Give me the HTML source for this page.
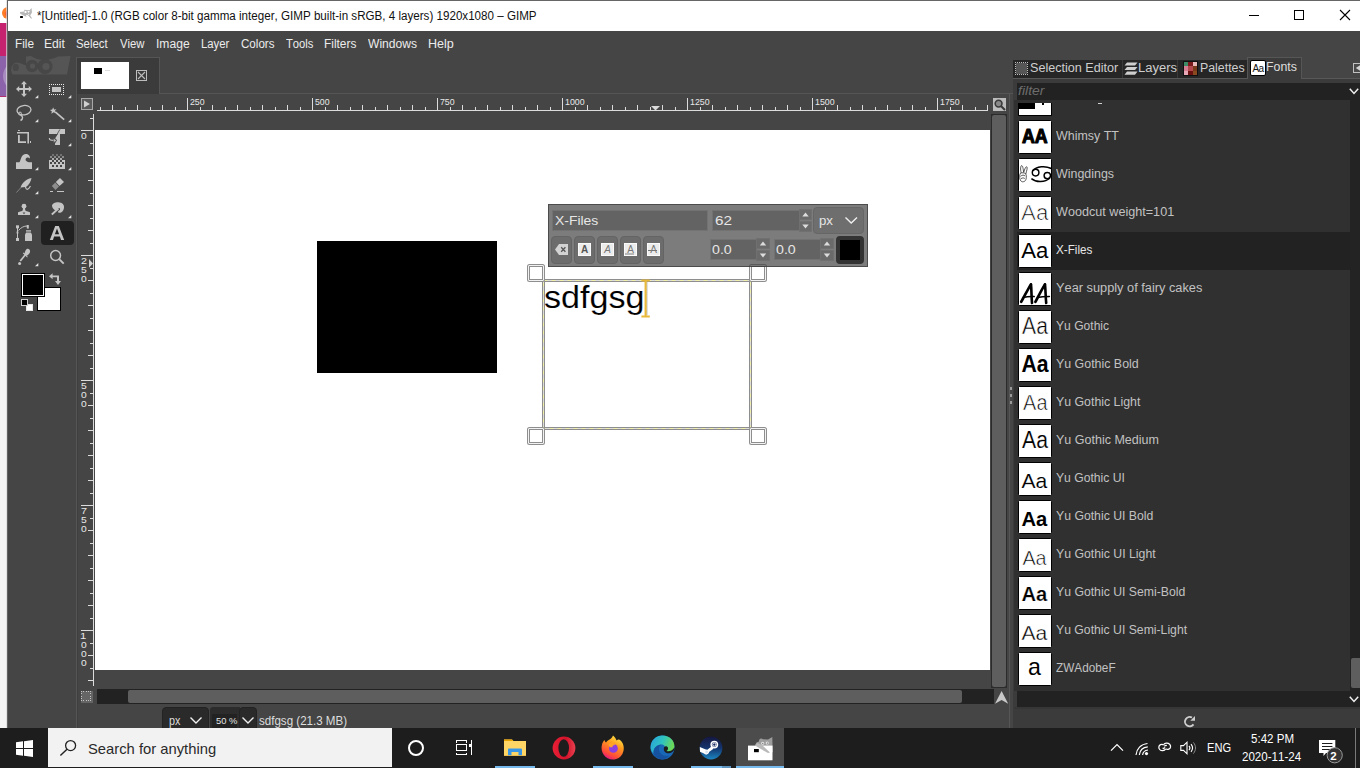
<!DOCTYPE html>
<html><head><meta charset="utf-8"><title>GIMP</title>
<style>
html,body{margin:0;padding:0;}
body{width:1360px;height:768px;overflow:hidden;position:relative;background:#454545;font-family:"Liberation Sans", sans-serif;}
.b{position:absolute;box-sizing:border-box;}
.t{position:absolute;white-space:pre;font-kerning:none;transform-origin:0 0;font-family:"Liberation Sans", sans-serif;}
svg{position:absolute;overflow:visible;}
</style></head><body>

<!-- left strip of the window behind -->
<div class="b" style="left:0px;top:0px;width:8px;height:768px;background:#f4f4f4;"></div>
<div class="b" style="left:0px;top:0px;width:8px;height:24px;background:#ffffff;"></div>
<div class="b" style="left:0px;top:23px;width:8px;height:33px;background:#c5226f;"></div>
<div class="b" style="left:0px;top:56px;width:8px;height:40px;background:#8c62ab;"></div>
<div class="b" style="left:0px;top:96px;width:8px;height:1px;background:#b03070;"></div>
<svg style="left:0px;top:0px;overflow:hidden" width="8" height="24"><circle cx="8" cy="13" r="6" fill="#ff7d26"/><circle cx="9" cy="14" r="3.5" fill="#e6353f"/></svg>
<svg style="left:0;top:56px;overflow:hidden" width="8" height="40"><circle cx="18" cy="20" r="15" fill="#a88cc0"/></svg>
<div class="b" style="left:6px;top:0px;width:1px;height:728px;background:#d8d8d8;opacity:.7"></div>
<div class="b" style="left:7px;top:0px;width:1px;height:728px;background:#626262;"></div>
<!-- title bar -->
<div class="b" style="left:8px;top:0px;width:1352px;height:31px;background:#ffffff;"></div>
<div class="b" style="left:7px;top:0px;width:1353px;height:1px;background:#666666;"></div>
<svg style="left:19px;top:7px" width="16" height="14" viewBox="19 7 16 14"><path d="M20 12 L24 11.6 L24.3 9.8 L29.5 10.2 L31.6 8 L32 12.5 L30.2 15.4 L31.2 17 L32.2 18.8 L30.6 18.2 L28.6 15.8 L25.5 16.6 L22.5 15 L20 13.6 Z" fill="#b9b9b9"/><rect x="24.6" y="11" width="1.8" height="2" fill="#fff"/><path d="M27.4 11 L29.8 11 L28.6 13 Z" fill="#fff"/><rect x="26" y="15" width="2.2" height="1" fill="#f4f4f4"/><rect x="28.2" y="14" width="1" height="1" fill="#f4f4f4"/><rect x="20" y="16" width="3" height="2" rx="0.4" fill="#000"/></svg>
<span class="t" style="left:37.31px;top:10.00px;font-size:12px;line-height:12px;color:#111;transform:scaleX(0.9678);">*[Untitled]-1.0 (RGB color 8-bit gamma integer, GIMP built-in sRGB, 4 layers) 1920x1080 – GIMP</span>
<div class="b" style="left:1249px;top:15px;width:10px;height:1px;background:#000;"></div>
<div class="b" style="left:1294px;top:10px;width:10px;height:10px;background:transparent;border:1px solid #000"></div>
<svg style="left:1340px;top:10px" width="10" height="10"><path d="M0 0 L10 10 M10 0 L0 10" stroke="#000" stroke-width="1.1" fill="none"/></svg>
<!-- menu bar -->
<span class="t" style="left:14.53px;top:38.00px;font-size:12px;line-height:12px;color:#ececec;transform:scaleX(0.9821);">File</span>
<span class="t" style="left:44.26px;top:38.00px;font-size:12px;line-height:12px;color:#ececec;transform:scaleX(1.0074);">Edit</span>
<span class="t" style="left:76.48px;top:38.00px;font-size:12px;line-height:12px;color:#ececec;transform:scaleX(0.9475);">Select</span>
<span class="t" style="left:119.95px;top:38.00px;font-size:12px;line-height:12px;color:#ececec;transform:scaleX(0.9428);">View</span>
<span class="t" style="left:155.88px;top:38.00px;font-size:12px;line-height:12px;color:#ececec;transform:scaleX(1.0091);">Image</span>
<span class="t" style="left:200.57px;top:38.00px;font-size:12px;line-height:12px;color:#ececec;transform:scaleX(0.9451);">Layer</span>
<span class="t" style="left:240.66px;top:38.00px;font-size:12px;line-height:12px;color:#ececec;transform:scaleX(0.9663);">Colors</span>
<span class="t" style="left:286.00px;top:38.00px;font-size:12px;line-height:12px;color:#ececec;transform:scaleX(0.9340);">Tools</span>
<span class="t" style="left:324.02px;top:38.00px;font-size:12px;line-height:12px;color:#ececec;transform:scaleX(0.9921);">Filters</span>
<span class="t" style="left:368.20px;top:38.00px;font-size:12px;line-height:12px;color:#ececec;transform:scaleX(1.0064);">Windows</span>
<span class="t" style="left:428.22px;top:38.00px;font-size:12px;line-height:12px;color:#ececec;transform:scaleX(1.0456);">Help</span>
<!-- toolbox -->
<div class="b" style="left:76px;top:94px;width:1px;height:634px;background:#555555;"></div>
<div class="b" style="left:77px;top:94px;width:1px;height:634px;background:#3f3f3f;"></div>
<svg style="left:8px;top:54px" width="68" height="24" viewBox="8 54 68 24"><path d="M26 56.5 L31 56 C36 59 40 60 44 60 C50 60 55 58 58 56.5 L70.5 56 L67 74.5 L12.5 74.5 C10 70 11 64 16 62.5 C20 62 23 65 26 65 Z" fill="#555555"/><ellipse cx="15.8" cy="67.4" rx="3.1" ry="3.6" fill="#484848"/><circle cx="32" cy="66" r="6.2" fill="#474747"/><circle cx="32.5" cy="66" r="2.6" fill="#555"/><circle cx="45" cy="66.5" r="7.6" fill="#474747"/><circle cx="46" cy="66.5" r="3.6" fill="#555"/></svg>
<svg style="left:16px;top:81px" width="16" height="16" viewBox="0 0 16 16"><path d="M8 0 L11 3.2 L9 3.2 L9 7 L12.8 7 L12.8 5 L16 8 L12.8 11 L12.8 9 L9 9 L9 12.8 L11 12.8 L8 16 L5 12.8 L7 12.8 L7 9 L3.2 9 L3.2 11 L0 8 L3.2 5 L3.2 7 L7 7 L7 3.2 L5 3.2 Z" fill="#c4c4c4"/></svg>
<svg style="left:35px;top:95px" width="4" height="4"><path d="M3.3 0 L3.3 3.3 L0 3.3 Z" fill="#e2e2e2"/></svg>
<svg style="left:49px;top:84px" width="16" height="12" viewBox="0 0 16 12" shape-rendering="crispEdges"><rect x="0" y="0" width="1" height="1" fill="#e8e8e8"/><rect x="0" y="10" width="1" height="1" fill="#e8e8e8"/><rect x="2" y="0" width="1" height="1" fill="#e8e8e8"/><rect x="2" y="10" width="1" height="1" fill="#e8e8e8"/><rect x="4" y="0" width="1" height="1" fill="#e8e8e8"/><rect x="4" y="10" width="1" height="1" fill="#e8e8e8"/><rect x="6" y="0" width="1" height="1" fill="#e8e8e8"/><rect x="6" y="10" width="1" height="1" fill="#e8e8e8"/><rect x="8" y="0" width="1" height="1" fill="#e8e8e8"/><rect x="8" y="10" width="1" height="1" fill="#e8e8e8"/><rect x="10" y="0" width="1" height="1" fill="#e8e8e8"/><rect x="10" y="10" width="1" height="1" fill="#e8e8e8"/><rect x="12" y="0" width="1" height="1" fill="#e8e8e8"/><rect x="12" y="10" width="1" height="1" fill="#e8e8e8"/><rect x="14" y="0" width="1" height="1" fill="#e8e8e8"/><rect x="14" y="10" width="1" height="1" fill="#e8e8e8"/><rect x="0" y="2" width="1" height="1" fill="#e8e8e8"/><rect x="14" y="2" width="1" height="1" fill="#e8e8e8"/><rect x="0" y="4" width="1" height="1" fill="#e8e8e8"/><rect x="14" y="4" width="1" height="1" fill="#e8e8e8"/><rect x="0" y="6" width="1" height="1" fill="#e8e8e8"/><rect x="14" y="6" width="1" height="1" fill="#e8e8e8"/><rect x="0" y="8" width="1" height="1" fill="#e8e8e8"/><rect x="14" y="8" width="1" height="1" fill="#e8e8e8"/><rect x="3" y="3" width="9" height="5" fill="#c4c4c4"/></svg>
<svg style="left:68px;top:95px" width="4" height="4"><path d="M3.3 0 L3.3 3.3 L0 3.3 Z" fill="#e2e2e2"/></svg>
<svg style="left:15px;top:104px" width="18" height="18" viewBox="15 104 18 18"><ellipse cx="24" cy="110.2" rx="7" ry="4.7" transform="rotate(-8 24 110.2)" fill="none" stroke="#c4c4c4" stroke-width="1.3"/><circle cx="20" cy="113.6" r="1.5" fill="none" stroke="#c4c4c4" stroke-width="1"/><path d="M20.5 115 C23 116 23.5 119 20.5 120.5" fill="none" stroke="#c4c4c4" stroke-width="1.4"/></svg>
<svg style="left:35px;top:119px" width="4" height="4"><path d="M3.3 0 L3.3 3.3 L0 3.3 Z" fill="#e2e2e2"/></svg>
<svg style="left:48px;top:105px" width="18" height="18" viewBox="48 105 18 18"><path d="M53.1 107.2 L54.1 109.4 L56.4 109.2 L54.8 110.9 L55.8 113.2 L53.6 112.2 L51.4 113.7 L51.8 111.3 L49.9 109.9 L52.3 109.5 Z" fill="#c4c4c4"/><path d="M55.2 111.9 L64.2 119.7" stroke="#c4c4c4" stroke-width="1.7" fill="none"/></svg>
<svg style="left:68px;top:119px" width="4" height="4"><path d="M3.3 0 L3.3 3.3 L0 3.3 Z" fill="#e2e2e2"/></svg>
<svg style="left:16px;top:129px" width="16" height="16" viewBox="16 129 16 16"><rect x="18" y="130" width="1.8" height="1" fill="#c4c4c4"/><path d="M17 132 H29 V143.5 H27.4 V133.6 H17 Z" fill="#c4c4c4"/><path d="M18 135 H19.8 V141.2 H26 V143 H18 Z" fill="#c4c4c4"/><rect x="30" y="141" width="1" height="2" fill="#c4c4c4"/></svg>
<svg style="left:48px;top:128px" width="18" height="18" viewBox="48 128 18 18"><rect x="49" y="129" width="16" height="5" fill="#c4c4c4"/><path d="M57.8 134 L60 134 L60 144.9 L55 144.9 L55 143.4 L57 140.3 L55 137.9 Z" fill="#c4c4c4"/><path d="M59.9 129.4 L55 137.9" stroke="#454545" stroke-width="0.8" fill="none"/><path d="M49.3 138 C49.3 140.3 50.5 140.4 55 140.4" stroke="#c4c4c4" stroke-width="1.1" fill="none"/><path d="M53.6 138.2 L56.5 140.4 L53.6 142.7 Z" fill="#c4c4c4" stroke="#454545" stroke-width="0.5"/></svg>
<svg style="left:68px;top:143px" width="4" height="4"><path d="M3.3 0 L3.3 3.3 L0 3.3 Z" fill="#e2e2e2"/></svg>
<svg style="left:15px;top:152px" width="18" height="18" viewBox="15 152 18 18"><path d="M16 169 V162.3 H19.5 C21 160 21 154 26 154 C29 154 30.3 156.5 29.8 158.5 C28.5 157 26 157.3 25.6 159.2 C25.3 161.2 27.5 162.3 32 162.3 V169 Z" fill="#c4c4c4"/></svg>
<svg style="left:35px;top:167px" width="4" height="4"><path d="M3.3 0 L3.3 3.3 L0 3.3 Z" fill="#e2e2e2"/></svg>
<svg style="left:48px;top:153px" width="18" height="17" viewBox="48 153 18 17" shape-rendering="crispEdges"><rect x="49" y="160" width="16" height="9" fill="#c4c4c4"/><rect x="52" y="154" width="2" height="2" fill="#c4c4c4" opacity="0.35"/><rect x="56" y="154" width="2" height="2" fill="#c4c4c4" opacity="0.35"/><rect x="60" y="154" width="2" height="2" fill="#c4c4c4" opacity="0.35"/><rect x="50" y="156" width="2" height="2" fill="#c4c4c4" opacity="0.55"/><rect x="54" y="156" width="2" height="2" fill="#c4c4c4" opacity="0.55"/><rect x="58" y="156" width="2" height="2" fill="#c4c4c4" opacity="0.55"/><rect x="62" y="156" width="2" height="2" fill="#c4c4c4" opacity="0.55"/><rect x="52" y="158" width="2" height="2" fill="#c4c4c4" opacity="0.8"/><rect x="56" y="158" width="2" height="2" fill="#c4c4c4" opacity="0.8"/><rect x="60" y="158" width="2" height="2" fill="#c4c4c4" opacity="0.8"/><rect x="52" y="160" width="2" height="2" fill="#454545"/><rect x="56" y="160" width="2" height="2" fill="#454545"/><rect x="60" y="160" width="2" height="2" fill="#454545"/><rect x="50" y="162.4" width="2" height="2" fill="#454545"/><rect x="54" y="162.4" width="2" height="2" fill="#454545"/><rect x="58" y="162.4" width="2" height="2" fill="#454545"/><rect x="62" y="162.4" width="2" height="2" fill="#454545"/><rect x="52" y="165.2" width="2" height="2" fill="#454545"/><rect x="56" y="165.2" width="2" height="2" fill="#454545"/><rect x="60" y="165.2" width="2" height="2" fill="#454545"/></svg>
<svg style="left:68px;top:167px" width="4" height="4"><path d="M3.3 0 L3.3 3.3 L0 3.3 Z" fill="#e2e2e2"/></svg>
<svg style="left:15px;top:176px" width="18" height="18" viewBox="15 176 18 18"><path d="M31.5 178 C26 179 22 183 20.5 187.5 L26 187 C29 185 31 181.5 31.5 178 Z" fill="#c4c4c4"/><path d="M21 187.5 L16.5 192.5" stroke="#c4c4c4" stroke-width="0.8" opacity=".6" fill="none"/><path d="M25.5 187 C26 190 28 190.5 30.5 186" stroke="#c4c4c4" stroke-width="1.2" fill="none"/></svg>
<svg style="left:35px;top:191px" width="4" height="4"><path d="M3.3 0 L3.3 3.3 L0 3.3 Z" fill="#e2e2e2"/></svg>
<svg style="left:48px;top:176px" width="18" height="18" viewBox="48 176 18 18"><path d="M60 178 L64 182 L59.5 186 L55.8 182 Z" fill="#c4c4c4"/><path d="M55.3 182.6 L59 186.5 L55.5 190 L51.8 186 Z" fill="#8d8d8d"/><rect x="50" y="191" width="3" height="1" fill="#c4c4c4"/><rect x="57" y="191" width="7" height="1" fill="#c4c4c4"/></svg>
<svg style="left:16px;top:202px" width="16" height="16" viewBox="16 202 16 16"><circle cx="24" cy="206.2" r="2.4" fill="#c4c4c4"/><path d="M23 208 H25 L25.3 210.5 C27 211.5 29 211.8 30 212.3 V215 H18 V212.3 C19 211.8 21 211.5 22.7 210.5 Z" fill="#c4c4c4"/><path d="M22.6 212.6 H25.4 L24 214.2 Z" fill="#454545"/></svg>
<svg style="left:35px;top:215px" width="4" height="4"><path d="M3.3 0 L3.3 3.3 L0 3.3 Z" fill="#e2e2e2"/></svg>
<svg style="left:48px;top:200px" width="18" height="18" viewBox="48 200 18 18"><path d="M52 206 C52 202 62 200.5 63.8 205.5 C64.8 209 62.5 213 59 212.8 C57.5 212.7 58 211 59 210.5 C60.5 210 60.5 208 58.8 208 L55.5 210.5 C54 210 52.3 208 52 206 Z" fill="#c4c4c4"/><path d="M58.5 208.5 L51.8 214.5" stroke="#c4c4c4" stroke-width="1.8" fill="none"/></svg>
<svg style="left:68px;top:215px" width="4" height="4"><path d="M3.3 0 L3.3 3.3 L0 3.3 Z" fill="#e2e2e2"/></svg>
<svg style="left:15px;top:224px" width="18" height="18" viewBox="15 224 18 18"><rect x="16" y="225.3" width="3" height="3" fill="#c4c4c4"/><rect x="16" y="238" width="3" height="3" fill="#c4c4c4"/><rect x="16.6" y="231.5" width="1.8" height="2" fill="#c4c4c4"/><path d="M17.5 227 V239" stroke="#c4c4c4" stroke-width="1" fill="none"/><path d="M18.5 230.5 C21 227.5 24 226 27 226" stroke="#c4c4c4" stroke-width="1" fill="none"/><rect x="26.8" y="225" width="2" height="3.6" fill="#c4c4c4"/><rect x="26" y="230" width="5" height="1.8" fill="#a5a5a5"/><path d="M25 234.5 L26.2 232.5 H30.8 L32 234.5 V241 H25 Z" fill="#c4c4c4"/></svg>
<div class="b" style="left:41px;top:221px;width:33px;height:24px;background:#202020;border-radius:4px"></div>
<svg style="left:49px;top:225px" width="16" height="16" viewBox="0 0 16 16"><path d="M0.8 15 L6.2 1 H9.8 L15.2 15 H12 L10.9 11.6 H5.1 L4 15 Z M5.9 9.2 H10.1 L8 3.4 Z" fill="#c4c4c4"/></svg>
<svg style="left:16px;top:248px" width="16" height="18" viewBox="16 248 16 18"><path d="M26.5 249.2 C28.5 248 30.5 249.8 30 252 C29.5 254 27.5 255.5 26.5 255.8 L27.8 256.8 L27.2 257.6 L22.8 253.3 L23.6 252.6 L24.6 253.5 C24.8 252 25.5 250 26.5 249.2 Z" fill="#c4c4c4"/><path d="M25.5 254.5 L20.3 261" stroke="#c4c4c4" stroke-width="1.7" fill="none"/><circle cx="19.6" cy="263.6" r="1.5" fill="#c4c4c4"/></svg>
<svg style="left:35px;top:263px" width="4" height="4"><path d="M3.3 0 L3.3 3.3 L0 3.3 Z" fill="#e2e2e2"/></svg>
<svg style="left:48px;top:248px" width="18" height="18" viewBox="48 248 18 18"><circle cx="55.6" cy="255.5" r="4.9" fill="none" stroke="#c4c4c4" stroke-width="1.5"/><path d="M59.2 259.2 L63.7 263.7" stroke="#c4c4c4" stroke-width="1.9" fill="none"/></svg>
<div class="b" style="left:37px;top:287px;width:24px;height:24px;background:#fff;border:1px solid #000"></div>
<div class="b" style="left:21px;top:273px;width:24px;height:24px;background:#000;border:1px solid #000;box-shadow:inset 0 0 0 1px #fff"></div>
<svg style="left:49px;top:273px" width="13" height="13" viewBox="49 273 13 13"><path d="M49 276.2 L52.6 273.3 V275.4 H59 V281 H61 L58 285 L55 281 H57 V277.2 H52.6 V279.2 Z" fill="#c4c4c4"/></svg>
<div class="b" style="left:26px;top:304px;width:7px;height:7px;background:#fff;border:1px solid #e8e8e8"></div>
<div class="b" style="left:21px;top:299px;width:7px;height:7px;background:#000;border:1px solid #cfcfcf"></div>
<!-- image tab -->
<div class="b" style="left:76px;top:57px;width:84px;height:37px;background:#3b3b3b;border:1px solid #555;border-bottom:none"></div>
<div class="b" style="left:159px;top:93px;width:854px;height:1px;background:#555;"></div>
<div class="b" style="left:81px;top:62px;width:48px;height:27px;background:#fff;"></div>
<div class="b" style="left:94px;top:68px;width:8px;height:6px;background:#000;"></div>
<div class="b" style="left:105px;top:70px;width:5px;height:1px;background:#ddd;"></div>
<svg style="left:136px;top:70px" width="11" height="11"><rect x="0.5" y="0.5" width="10" height="10" fill="none" stroke="#bdbdbd"/><path d="M2 2 L9 9 M9 2 L2 9" stroke="#bdbdbd" stroke-width="1.1"/></svg>
<!-- rulers -->
<svg style="left:81px;top:98px" width="12" height="12"><rect x="0.5" y="0.5" width="11" height="11" fill="#5a5a5a" stroke="#a8a8a8"/><path d="M3 2.6 L9 6 L3 9.4 Z" fill="#d0d0d0"/></svg>
<svg style="left:0;top:0" width="1010" height="130" shape-rendering="crispEdges"><rect x="97" y="110" width="891" height="1" fill="#dcdcdc"/><rect x="100" y="107" width="1" height="3" fill="#dcdcdc"/><rect x="112" y="105" width="1" height="5" fill="#dcdcdc"/><rect x="125" y="107" width="1" height="3" fill="#dcdcdc"/><rect x="137" y="105" width="1" height="5" fill="#dcdcdc"/><rect x="150" y="107" width="1" height="3" fill="#dcdcdc"/><rect x="162" y="105" width="1" height="5" fill="#dcdcdc"/><rect x="175" y="107" width="1" height="3" fill="#dcdcdc"/><rect x="187" y="98" width="1" height="12" fill="#dcdcdc"/><rect x="200" y="107" width="1" height="3" fill="#dcdcdc"/><rect x="212" y="105" width="1" height="5" fill="#dcdcdc"/><rect x="225" y="107" width="1" height="3" fill="#dcdcdc"/><rect x="237" y="105" width="1" height="5" fill="#dcdcdc"/><rect x="250" y="107" width="1" height="3" fill="#dcdcdc"/><rect x="262" y="105" width="1" height="5" fill="#dcdcdc"/><rect x="275" y="107" width="1" height="3" fill="#dcdcdc"/><rect x="287" y="105" width="1" height="5" fill="#dcdcdc"/><rect x="300" y="107" width="1" height="3" fill="#dcdcdc"/><rect x="312" y="98" width="1" height="12" fill="#dcdcdc"/><rect x="325" y="107" width="1" height="3" fill="#dcdcdc"/><rect x="337" y="105" width="1" height="5" fill="#dcdcdc"/><rect x="350" y="107" width="1" height="3" fill="#dcdcdc"/><rect x="362" y="105" width="1" height="5" fill="#dcdcdc"/><rect x="375" y="107" width="1" height="3" fill="#dcdcdc"/><rect x="387" y="105" width="1" height="5" fill="#dcdcdc"/><rect x="400" y="107" width="1" height="3" fill="#dcdcdc"/><rect x="412" y="105" width="1" height="5" fill="#dcdcdc"/><rect x="425" y="107" width="1" height="3" fill="#dcdcdc"/><rect x="437" y="98" width="1" height="12" fill="#dcdcdc"/><rect x="450" y="107" width="1" height="3" fill="#dcdcdc"/><rect x="462" y="105" width="1" height="5" fill="#dcdcdc"/><rect x="475" y="107" width="1" height="3" fill="#dcdcdc"/><rect x="487" y="105" width="1" height="5" fill="#dcdcdc"/><rect x="500" y="107" width="1" height="3" fill="#dcdcdc"/><rect x="512" y="105" width="1" height="5" fill="#dcdcdc"/><rect x="525" y="107" width="1" height="3" fill="#dcdcdc"/><rect x="537" y="105" width="1" height="5" fill="#dcdcdc"/><rect x="550" y="107" width="1" height="3" fill="#dcdcdc"/><rect x="562" y="98" width="1" height="12" fill="#dcdcdc"/><rect x="575" y="107" width="1" height="3" fill="#dcdcdc"/><rect x="587" y="105" width="1" height="5" fill="#dcdcdc"/><rect x="600" y="107" width="1" height="3" fill="#dcdcdc"/><rect x="612" y="105" width="1" height="5" fill="#dcdcdc"/><rect x="625" y="107" width="1" height="3" fill="#dcdcdc"/><rect x="637" y="105" width="1" height="5" fill="#dcdcdc"/><rect x="650" y="107" width="1" height="3" fill="#dcdcdc"/><rect x="662" y="105" width="1" height="5" fill="#dcdcdc"/><rect x="675" y="107" width="1" height="3" fill="#dcdcdc"/><rect x="687" y="98" width="1" height="12" fill="#dcdcdc"/><rect x="700" y="107" width="1" height="3" fill="#dcdcdc"/><rect x="712" y="105" width="1" height="5" fill="#dcdcdc"/><rect x="725" y="107" width="1" height="3" fill="#dcdcdc"/><rect x="737" y="105" width="1" height="5" fill="#dcdcdc"/><rect x="750" y="107" width="1" height="3" fill="#dcdcdc"/><rect x="762" y="105" width="1" height="5" fill="#dcdcdc"/><rect x="775" y="107" width="1" height="3" fill="#dcdcdc"/><rect x="787" y="105" width="1" height="5" fill="#dcdcdc"/><rect x="800" y="107" width="1" height="3" fill="#dcdcdc"/><rect x="812" y="98" width="1" height="12" fill="#dcdcdc"/><rect x="825" y="107" width="1" height="3" fill="#dcdcdc"/><rect x="837" y="105" width="1" height="5" fill="#dcdcdc"/><rect x="850" y="107" width="1" height="3" fill="#dcdcdc"/><rect x="862" y="105" width="1" height="5" fill="#dcdcdc"/><rect x="875" y="107" width="1" height="3" fill="#dcdcdc"/><rect x="887" y="105" width="1" height="5" fill="#dcdcdc"/><rect x="900" y="107" width="1" height="3" fill="#dcdcdc"/><rect x="912" y="105" width="1" height="5" fill="#dcdcdc"/><rect x="925" y="107" width="1" height="3" fill="#dcdcdc"/><rect x="937" y="98" width="1" height="12" fill="#dcdcdc"/><rect x="950" y="107" width="1" height="3" fill="#dcdcdc"/><rect x="962" y="105" width="1" height="5" fill="#dcdcdc"/><rect x="975" y="107" width="1" height="3" fill="#dcdcdc"/><rect x="987" y="105" width="1" height="5" fill="#dcdcdc"/><rect x="93" y="114" width="1" height="572" fill="#dcdcdc"/><rect x="90" y="118" width="3" height="1" fill="#dcdcdc"/><rect x="81" y="130" width="12" height="1" fill="#dcdcdc"/><rect x="90" y="143" width="3" height="1" fill="#dcdcdc"/><rect x="88" y="155" width="5" height="1" fill="#dcdcdc"/><rect x="90" y="168" width="3" height="1" fill="#dcdcdc"/><rect x="88" y="180" width="5" height="1" fill="#dcdcdc"/><rect x="90" y="193" width="3" height="1" fill="#dcdcdc"/><rect x="88" y="205" width="5" height="1" fill="#dcdcdc"/><rect x="90" y="218" width="3" height="1" fill="#dcdcdc"/><rect x="88" y="230" width="5" height="1" fill="#dcdcdc"/><rect x="90" y="243" width="3" height="1" fill="#dcdcdc"/><rect x="81" y="255" width="12" height="1" fill="#dcdcdc"/><rect x="90" y="268" width="3" height="1" fill="#dcdcdc"/><rect x="88" y="280" width="5" height="1" fill="#dcdcdc"/><rect x="90" y="293" width="3" height="1" fill="#dcdcdc"/><rect x="88" y="305" width="5" height="1" fill="#dcdcdc"/><rect x="90" y="318" width="3" height="1" fill="#dcdcdc"/><rect x="88" y="330" width="5" height="1" fill="#dcdcdc"/><rect x="90" y="343" width="3" height="1" fill="#dcdcdc"/><rect x="88" y="355" width="5" height="1" fill="#dcdcdc"/><rect x="90" y="368" width="3" height="1" fill="#dcdcdc"/><rect x="81" y="380" width="12" height="1" fill="#dcdcdc"/><rect x="90" y="393" width="3" height="1" fill="#dcdcdc"/><rect x="88" y="405" width="5" height="1" fill="#dcdcdc"/><rect x="90" y="418" width="3" height="1" fill="#dcdcdc"/><rect x="88" y="430" width="5" height="1" fill="#dcdcdc"/><rect x="90" y="443" width="3" height="1" fill="#dcdcdc"/><rect x="88" y="455" width="5" height="1" fill="#dcdcdc"/><rect x="90" y="468" width="3" height="1" fill="#dcdcdc"/><rect x="88" y="480" width="5" height="1" fill="#dcdcdc"/><rect x="90" y="493" width="3" height="1" fill="#dcdcdc"/><rect x="81" y="505" width="12" height="1" fill="#dcdcdc"/><rect x="90" y="518" width="3" height="1" fill="#dcdcdc"/><rect x="88" y="530" width="5" height="1" fill="#dcdcdc"/><rect x="90" y="543" width="3" height="1" fill="#dcdcdc"/><rect x="88" y="555" width="5" height="1" fill="#dcdcdc"/><rect x="90" y="568" width="3" height="1" fill="#dcdcdc"/><rect x="88" y="580" width="5" height="1" fill="#dcdcdc"/><rect x="90" y="593" width="3" height="1" fill="#dcdcdc"/><rect x="88" y="605" width="5" height="1" fill="#dcdcdc"/><rect x="90" y="618" width="3" height="1" fill="#dcdcdc"/><rect x="81" y="630" width="12" height="1" fill="#dcdcdc"/><rect x="90" y="643" width="3" height="1" fill="#dcdcdc"/><rect x="88" y="655" width="5" height="1" fill="#dcdcdc"/><rect x="90" y="668" width="3" height="1" fill="#dcdcdc"/><rect x="88" y="680" width="5" height="1" fill="#dcdcdc"/><path d="M651 106 L660 106 L655.5 110.4 Z" fill="#dadada" shape-rendering="auto"/><path d="M89 259 L93 263.4 L89 267.8 Z" fill="#cfcfcf" shape-rendering="auto"/></svg>
<span class="t" style="left:189.86px;top:96.85px;font-size:9.7px;line-height:9.7px;color:#e8e8e8;transform:scaleX(0.9042);">250</span>
<span class="t" style="left:314.95px;top:96.85px;font-size:9.7px;line-height:9.7px;color:#e8e8e8;transform:scaleX(0.8984);">500</span>
<span class="t" style="left:439.85px;top:96.85px;font-size:9.7px;line-height:9.7px;color:#e8e8e8;transform:scaleX(0.9048);">750</span>
<span class="t" style="left:564.63px;top:96.85px;font-size:9.7px;line-height:9.7px;color:#e8e8e8;transform:scaleX(0.9090);">1000</span>
<span class="t" style="left:689.63px;top:96.85px;font-size:9.7px;line-height:9.7px;color:#e8e8e8;transform:scaleX(0.9090);">1250</span>
<span class="t" style="left:814.63px;top:96.85px;font-size:9.7px;line-height:9.7px;color:#e8e8e8;transform:scaleX(0.9090);">1500</span>
<span class="t" style="left:939.63px;top:96.85px;font-size:9.7px;line-height:9.7px;color:#e8e8e8;transform:scaleX(0.9090);">1750</span>
<span class="t" style="left:80.90px;top:130.85px;font-size:9.7px;line-height:9.7px;color:#e8e8e8;transform:scaleX(1.0567);">0</span>
<span class="t" style="left:80.76px;top:255.85px;font-size:9.7px;line-height:9.7px;color:#e8e8e8;transform:scaleX(1.1088);">2</span>
<span class="t" style="left:80.89px;top:264.85px;font-size:9.7px;line-height:9.7px;color:#e8e8e8;transform:scaleX(1.0655);">5</span>
<span class="t" style="left:80.90px;top:273.85px;font-size:9.7px;line-height:9.7px;color:#e8e8e8;transform:scaleX(1.0567);">0</span>
<span class="t" style="left:80.89px;top:380.85px;font-size:9.7px;line-height:9.7px;color:#e8e8e8;transform:scaleX(1.0655);">5</span>
<span class="t" style="left:80.90px;top:389.85px;font-size:9.7px;line-height:9.7px;color:#e8e8e8;transform:scaleX(1.0567);">0</span>
<span class="t" style="left:80.90px;top:398.85px;font-size:9.7px;line-height:9.7px;color:#e8e8e8;transform:scaleX(1.0567);">0</span>
<span class="t" style="left:80.75px;top:505.85px;font-size:9.7px;line-height:9.7px;color:#e8e8e8;transform:scaleX(1.1112);">7</span>
<span class="t" style="left:80.89px;top:514.85px;font-size:9.7px;line-height:9.7px;color:#e8e8e8;transform:scaleX(1.0655);">5</span>
<span class="t" style="left:80.90px;top:523.85px;font-size:9.7px;line-height:9.7px;color:#e8e8e8;transform:scaleX(1.0567);">0</span>
<span class="t" style="left:80.43px;top:630.85px;font-size:9.7px;line-height:9.7px;color:#e8e8e8;transform:scaleX(1.1716);">1</span>
<span class="t" style="left:80.90px;top:639.85px;font-size:9.7px;line-height:9.7px;color:#e8e8e8;transform:scaleX(1.0567);">0</span>
<span class="t" style="left:80.90px;top:648.85px;font-size:9.7px;line-height:9.7px;color:#e8e8e8;transform:scaleX(1.0567);">0</span>
<span class="t" style="left:80.90px;top:657.85px;font-size:9.7px;line-height:9.7px;color:#e8e8e8;transform:scaleX(1.0567);">0</span>
<!-- canvas -->
<div class="b" style="left:95px;top:130px;width:895px;height:540px;background:#ffffff;"></div>
<div class="b" style="left:317px;top:241px;width:180px;height:132px;background:#000000;"></div>
<svg style="left:993px;top:98px" width="13" height="13"><rect width="13" height="13" fill="#bcbcbc"/><circle cx="5.6" cy="5.6" r="3.4" fill="#888" stroke="#3a3a3a" stroke-width="1.6"/><path d="M8.2 8.2 L12 12" stroke="#3a3a3a" stroke-width="2"/></svg>
<div class="b" style="left:991px;top:114px;width:16px;height:574px;background:#2b2b2b;"></div>
<div class="b" style="left:992px;top:115px;width:14px;height:572px;background:#5e5e5e;border-radius:2px"></div>
<div class="b" style="left:97px;top:689px;width:897px;height:15px;background:#222222;"></div>
<div class="b" style="left:128px;top:690px;width:834px;height:13px;background:#5e5e5e;border-radius:2px"></div>
<svg style="left:81px;top:691px" width="12" height="12" shape-rendering="crispEdges"><rect width="12" height="12" fill="#656565"/><rect x="0" y="0" width="1" height="1" fill="#c4c4c4"/><rect x="0" y="9" width="1" height="1" fill="#c4c4c4"/><rect x="0" y="0" width="1" height="1" fill="#c4c4c4"/><rect x="9" y="0" width="1" height="1" fill="#c4c4c4"/><rect x="2" y="0" width="1" height="1" fill="#c4c4c4"/><rect x="2" y="9" width="1" height="1" fill="#c4c4c4"/><rect x="0" y="2" width="1" height="1" fill="#c4c4c4"/><rect x="9" y="2" width="1" height="1" fill="#c4c4c4"/><rect x="4.5" y="0" width="1" height="1" fill="#c4c4c4"/><rect x="4.5" y="9" width="1" height="1" fill="#c4c4c4"/><rect x="0" y="4.5" width="1" height="1" fill="#c4c4c4"/><rect x="9" y="4.5" width="1" height="1" fill="#c4c4c4"/><rect x="7" y="0" width="1" height="1" fill="#c4c4c4"/><rect x="7" y="9" width="1" height="1" fill="#c4c4c4"/><rect x="0" y="7" width="1" height="1" fill="#c4c4c4"/><rect x="9" y="7" width="1" height="1" fill="#c4c4c4"/><rect x="9" y="0" width="1" height="1" fill="#c4c4c4"/><rect x="9" y="9" width="1" height="1" fill="#c4c4c4"/><rect x="0" y="9" width="1" height="1" fill="#c4c4c4"/><rect x="9" y="9" width="1" height="1" fill="#c4c4c4"/></svg>
<svg style="left:994.5px;top:690.5px" width="14" height="14"><path d="M6.6 0 L13.2 12.8 L6.6 9 L0 12.8 Z" fill="#c8c8c8"/></svg>
<!-- text layer frame -->
<svg style="left:0;top:0" width="1010" height="700"><rect x="543.5" y="280.5" width="207" height="148" fill="none" stroke="#8e8e8e" stroke-width="3"/><rect x="543.5" y="280.5" width="207" height="148" fill="none" stroke="#dcdcdc" stroke-width="1"/><rect x="543.5" y="280.5" width="207" height="148" fill="none" stroke="#f3f0aa" stroke-width="1" stroke-dasharray="4 4"/><rect x="528.5" y="265.5" width="15" height="15" rx="1" fill="#fff" stroke="#8e8e8e" stroke-width="3"/><rect x="528.5" y="265.5" width="15" height="15" rx="0.5" fill="none" stroke="#f2f2f2" stroke-width="1"/><rect x="750.5" y="265.5" width="15" height="15" rx="1" fill="#fff" stroke="#8e8e8e" stroke-width="3"/><rect x="750.5" y="265.5" width="15" height="15" rx="0.5" fill="none" stroke="#f2f2f2" stroke-width="1"/><rect x="528.5" y="428.5" width="15" height="15" rx="1" fill="#fff" stroke="#8e8e8e" stroke-width="3"/><rect x="528.5" y="428.5" width="15" height="15" rx="0.5" fill="none" stroke="#f2f2f2" stroke-width="1"/><rect x="750.5" y="428.5" width="15" height="15" rx="1" fill="#fff" stroke="#8e8e8e" stroke-width="3"/><rect x="750.5" y="428.5" width="15" height="15" rx="0.5" fill="none" stroke="#f2f2f2" stroke-width="1"/><path d="M646.9 282 V315.4" stroke="#9a9a9a" stroke-width="0.8" fill="none"/><path d="M641.4 280.5 H649.8 M645.6 280.5 V316.5 M641.4 316.5 H649.8" stroke="#e9b93a" stroke-width="2.1" fill="none"/></svg>
<span class="t" style="left:543.55px;top:282.40px;font-size:31px;line-height:31px;color:#000;transform:scaleX(1.1009);-webkit-text-stroke:0.12px #fff;">sdfgsg</span>
<!-- text tool overlay -->
<div class="b" style="left:548px;top:204px;width:319.5px;height:63px;background:rgba(69,69,69,0.705);border:1px solid rgba(60,60,60,0.75)"></div>
<div class="b" style="left:552px;top:210px;width:156px;height:21px;background:#636363;border:1px solid #727272"></div>
<span class="t" style="left:554.99px;top:214.75px;font-size:12.5px;line-height:12.5px;color:#e6e6e6;transform:scaleX(1.1138);">X-Files</span>
<div class="b" style="left:712px;top:210px;width:88px;height:21px;background:#636363;border:1px solid #727272"></div>
<span class="t" style="left:714.52px;top:214.75px;font-size:12.5px;line-height:12.5px;color:#e6e6e6;transform:scaleX(1.2262);">62</span>
<div class="b" style="left:799px;top:209px;width:13px;height:11px;background:#6a6a6a;border:1px solid #707070"></div><div class="b" style="left:799px;top:221px;width:13px;height:11px;background:#6a6a6a;border:1px solid #707070"></div><svg style="left:799px;top:209px" width="13" height="23"><path d="M3.3 7.5 L6.5 3.5 L9.7 7.5 Z M3.3 15.5 L6.5 19.5 L9.7 15.5 Z" fill="#dcdcdc"/></svg>
<div class="b" style="left:813px;top:207px;width:51px;height:27px;background:#6e6e6e;border:1px solid #666;border-radius:4px"></div>
<span class="t" style="left:819.15px;top:214.75px;font-size:12.5px;line-height:12.5px;color:#e6e6e6;transform:scaleX(1.0602);">px</span>
<svg style="left:845px;top:217px" width="13" height="7"><path d="M0.5 0.5 L6.2 6 L12 0.5" stroke="#f0f0f0" stroke-width="1.4" fill="none"/></svg>
<div class="b" style="left:551px;top:236px;width:21px;height:28px;background:#6c6c6c;border:1px solid #646464;border-radius:4px"></div>
<div class="b" style="left:574px;top:236px;width:21px;height:28px;background:#6c6c6c;border:1px solid #646464;border-radius:4px"></div>
<div class="b" style="left:597px;top:236px;width:21px;height:28px;background:#6c6c6c;border:1px solid #646464;border-radius:4px"></div>
<div class="b" style="left:620px;top:236px;width:21px;height:28px;background:#6c6c6c;border:1px solid #646464;border-radius:4px"></div>
<div class="b" style="left:643px;top:236px;width:21px;height:28px;background:#6c6c6c;border:1px solid #646464;border-radius:4px"></div>
<svg style="left:555px;top:244px" width="13" height="11"><path d="M0 5.5 L4 0 H13 V11 H4 Z" fill="#d2d2d2"/><path d="M6.2 3.3 L10.4 7.7 M10.4 3.3 L6.2 7.7" stroke="#555" stroke-width="1.3"/></svg>
<div class="b" style="left:578px;top:243px;width:13px;height:13px;background:#ececec;border:1px solid #fafafa"></div>
<span class="t" style="left:578px;top:244px;width:13px;text-align:center;font-size:10px;line-height:11px;color:#555;font-weight:bold;">A</span>
<div class="b" style="left:601px;top:243px;width:13px;height:13px;background:#ececec;border:1px solid #fafafa"></div>
<span class="t" style="left:601px;top:244px;width:13px;text-align:center;font-size:10px;line-height:11px;color:#777;font-style:italic;">A</span>
<div class="b" style="left:624px;top:243px;width:13px;height:13px;background:#ececec;border:1px solid #fafafa"></div>
<span class="t" style="left:624px;top:244px;width:13px;text-align:center;font-size:10px;line-height:11px;color:#777;">A</span>
<div class="b" style="left:647px;top:243px;width:13px;height:13px;background:#ececec;border:1px solid #fafafa"></div>
<span class="t" style="left:647px;top:244px;width:13px;text-align:center;font-size:10px;line-height:11px;color:#777;">A</span>
<div class="b" style="left:625px;top:253px;width:9px;height:1.5px;background:#b8b8b8;"></div>
<div class="b" style="left:648px;top:250px;width:9px;height:1px;background:#777;"></div>
<div class="b" style="left:710px;top:239px;width:47px;height:21px;background:#636363;border:1px solid #727272"></div>
<span class="t" style="left:712.05px;top:243.55px;font-size:12.5px;line-height:12.5px;color:#e6e6e6;transform:scaleX(1.1341);">0.0</span>
<div class="b" style="left:756px;top:238px;width:14px;height:11px;background:#6a6a6a;border:1px solid #707070"></div><div class="b" style="left:756px;top:250px;width:14px;height:11px;background:#6a6a6a;border:1px solid #707070"></div><svg style="left:756px;top:238px" width="14" height="23"><path d="M3.8 7.5 L7.0 3.5 L10.2 7.5 Z M3.8 15.5 L7.0 19.5 L10.2 15.5 Z" fill="#dcdcdc"/></svg>
<div class="b" style="left:774px;top:239px;width:47px;height:21px;background:#636363;border:1px solid #727272"></div>
<span class="t" style="left:776.05px;top:243.55px;font-size:12.5px;line-height:12.5px;color:#e6e6e6;transform:scaleX(1.1341);">0.0</span>
<div class="b" style="left:820px;top:238px;width:14px;height:11px;background:#6a6a6a;border:1px solid #707070"></div><div class="b" style="left:820px;top:250px;width:14px;height:11px;background:#6a6a6a;border:1px solid #707070"></div><svg style="left:820px;top:238px" width="14" height="23"><path d="M3.8 7.5 L7.0 3.5 L10.2 7.5 Z M3.8 15.5 L7.0 19.5 L10.2 15.5 Z" fill="#dcdcdc"/></svg>
<div class="b" style="left:836px;top:236px;width:28px;height:28px;background:#000;border:4px solid #333;border-radius:4px"></div>
<!-- status bar -->
<div class="b" style="left:162px;top:707px;width:47px;height:22px;background:#2a2a2a;border:1px solid #232323;border-radius:4px 4px 0 0"></div>
<span class="t" style="left:168.70px;top:715.00px;font-size:12px;line-height:12px;color:#dcdcdc;transform:scaleX(0.9005);">px</span>
<svg style="left:190px;top:717px" width="13" height="7"><path d="M0.5 0.5 L6 6 L11.5 0.5" stroke="#f0f0f0" stroke-width="1.4" fill="none"/></svg>
<div class="b" style="left:210px;top:707px;width:30px;height:22px;background:#2c2c2c;border-radius:3px 0 0 0"></div>
<div class="b" style="left:212px;top:714px;width:25px;height:14px;background:#222;"></div>
<span class="t" style="left:215.92px;top:716.30px;font-size:9.6px;line-height:9.6px;color:#e4e4e4;transform:scaleX(0.9785);">50 %</span>
<div class="b" style="left:239px;top:707px;width:18px;height:22px;background:#2a2a2a;border:1px solid #232323;border-radius:4px 4px 0 0"></div>
<svg style="left:242px;top:717px" width="13" height="7"><path d="M0.5 0.5 L6 6 L11.5 0.5" stroke="#f0f0f0" stroke-width="1.4" fill="none"/></svg>
<span class="t" style="left:259.08px;top:714.60px;font-size:12px;line-height:12px;color:#dedede;transform:scaleX(0.9635);">sdfgsg (21.3 MB)</span>
<!-- right dock -->
<div class="b" style="left:1009px;top:93px;width:1px;height:635px;background:#565656;"></div>
<div class="b" style="left:1013px;top:78px;width:1px;height:650px;background:#585858;"></div>
<div class="b" style="left:1010px;top:387px;width:2px;height:3px;background:#9a9a9a;"></div>
<div class="b" style="left:1010px;top:394px;width:2px;height:3px;background:#9a9a9a;"></div>
<div class="b" style="left:1010px;top:401px;width:2px;height:3px;background:#9a9a9a;"></div>
<div class="b" style="left:1013px;top:60px;width:234px;height:18px;background:#262626;"></div>
<div class="b" style="left:1013px;top:78px;width:347px;height:650px;background:#3b3b3b;"></div>
<div class="b" style="left:1013px;top:78px;width:347px;height:1px;background:#585858;"></div>
<div class="b" style="left:1247px;top:57px;width:55px;height:22px;background:#3b3b3b;border:1px solid #565656;border-bottom:none"></div>
<div class="b" style="left:1122px;top:60px;width:1px;height:18px;background:#3a3a3a;"></div>
<div class="b" style="left:1177px;top:60px;width:1px;height:18px;background:#3a3a3a;"></div>
<svg style="left:1015px;top:62px" width="13" height="13" shape-rendering="crispEdges"><rect x="1" y="1" width="11" height="11" fill="#565656"/><rect x="0" y="0" width="1" height="1" fill="#bdbdbd"/><rect x="0" y="12" width="1" height="1" fill="#bdbdbd"/><rect x="0" y="0" width="1" height="1" fill="#bdbdbd"/><rect x="12" y="0" width="1" height="1" fill="#bdbdbd"/><rect x="2" y="0" width="1" height="1" fill="#bdbdbd"/><rect x="2" y="12" width="1" height="1" fill="#bdbdbd"/><rect x="0" y="2" width="1" height="1" fill="#bdbdbd"/><rect x="12" y="2" width="1" height="1" fill="#bdbdbd"/><rect x="4" y="0" width="1" height="1" fill="#bdbdbd"/><rect x="4" y="12" width="1" height="1" fill="#bdbdbd"/><rect x="0" y="4" width="1" height="1" fill="#bdbdbd"/><rect x="12" y="4" width="1" height="1" fill="#bdbdbd"/><rect x="6" y="0" width="1" height="1" fill="#bdbdbd"/><rect x="6" y="12" width="1" height="1" fill="#bdbdbd"/><rect x="0" y="6" width="1" height="1" fill="#bdbdbd"/><rect x="12" y="6" width="1" height="1" fill="#bdbdbd"/><rect x="8" y="0" width="1" height="1" fill="#bdbdbd"/><rect x="8" y="12" width="1" height="1" fill="#bdbdbd"/><rect x="0" y="8" width="1" height="1" fill="#bdbdbd"/><rect x="12" y="8" width="1" height="1" fill="#bdbdbd"/><rect x="10" y="0" width="1" height="1" fill="#bdbdbd"/><rect x="10" y="12" width="1" height="1" fill="#bdbdbd"/><rect x="0" y="10" width="1" height="1" fill="#bdbdbd"/><rect x="12" y="10" width="1" height="1" fill="#bdbdbd"/><rect x="12" y="0" width="1" height="1" fill="#bdbdbd"/><rect x="12" y="12" width="1" height="1" fill="#bdbdbd"/><rect x="0" y="12" width="1" height="1" fill="#bdbdbd"/><rect x="12" y="12" width="1" height="1" fill="#bdbdbd"/></svg>
<span class="t" style="left:1029.73px;top:61.75px;font-size:12.5px;line-height:12.5px;color:#cfcfcf;transform:scaleX(1.0084);">Selection Editor</span>
<svg style="left:1124px;top:62px" width="14" height="14"><path d="M3 0.5 H13.5 L11 3.6 H0.5 Z M3 5 H13.5 L11 8.1 H0.5 Z M3 9.6 H13.5 L11 12.7 H0.5 Z" fill="#cfcfcf"/></svg>
<span class="t" style="left:1138.33px;top:61.75px;font-size:12.5px;line-height:12.5px;color:#cfcfcf;transform:scaleX(1.0405);">Layers</span>
<svg style="left:1183px;top:61px" width="15" height="15" shape-rendering="crispEdges"><rect width="15" height="15" fill="#111"/><rect x="1.0" y="1.0" width="4.4" height="4.4" fill="#3d8a66"/><rect x="5.4" y="1.0" width="4.4" height="4.4" fill="#7a1a1a"/><rect x="9.8" y="1.0" width="4.4" height="4.4" fill="#e9b9b9"/><rect x="1.0" y="5.4" width="4.4" height="4.4" fill="#d77f92"/><rect x="5.4" y="5.4" width="4.4" height="4.4" fill="#b5484f"/><rect x="9.8" y="5.4" width="4.4" height="4.4" fill="#7a3a1a"/><rect x="1.0" y="9.8" width="4.4" height="4.4" fill="#e8a7b7"/><rect x="5.4" y="9.8" width="4.4" height="4.4" fill="#6a1010"/><rect x="9.8" y="9.8" width="4.4" height="4.4" fill="#8a4a20"/></svg>
<span class="t" style="left:1199.59px;top:61.75px;font-size:12.5px;line-height:12.5px;color:#cfcfcf;transform:scaleX(0.9888);">Palettes</span>
<div class="b" style="left:1250px;top:60px;width:16px;height:16px;background:#fff;border:1px solid #000;border-radius:2px"></div>
<span class="t" style="left:1250px;top:62.5px;width:16px;text-align:center;font-size:10px;line-height:11px;color:#111;letter-spacing:-0.6px">Aa</span>
<span class="t" style="left:1266.48px;top:60.75px;font-size:12.5px;line-height:12.5px;color:#dedede;transform:scaleX(0.9904);">Fonts</span>
<svg style="left:1353px;top:63px;overflow:hidden" width="7" height="10"><rect x="0.5" y="0.5" width="9" height="9" fill="#4a4a4a" stroke="#c0c0c0"/><path d="M7.5 2 L2.8 5 L7.5 8 Z" fill="#d4d4d4"/></svg>
<div class="b" style="left:1017px;top:83px;width:343px;height:17px;background:#222222;"></div>
<span class="t" style="left:1018.03px;top:84.75px;font-size:12.5px;line-height:12.5px;color:#6d6d6d;transform:scaleX(1.1222);font-style:italic;">filter</span>
<svg style="left:1349px;top:88px" width="10" height="7"><path d="M0.8 0.8 L5 5.4 L9.2 0.8" stroke="#f0f0f0" stroke-width="1.5" fill="none"/></svg>
<div class="b" style="left:1014px;top:100px;width:346px;height:591px;background:#303030;"></div>
<div class="b" style="left:1017px;top:232px;width:333px;height:38px;background:#222222;"></div>
<div class="b" style="left:1350px;top:100px;width:10px;height:591px;background:#232323;"></div>
<div class="b" style="left:1351px;top:658px;width:10px;height:30px;background:#5e5e5e;border-radius:2px 0 0 2px"></div>
<div class="b" style="left:1018px;top:103px;width:34px;height:13px;background:#fff;border:1px solid #000;border-top:none;border-radius:0 0 1px 1px"></div>
<div class="b" style="left:1019px;top:103px;width:16px;height:5.6px;background:#000;"></div>
<div class="b" style="left:1042px;top:103px;width:2px;height:1.5px;background:#000;"></div>
<div class="b" style="left:1098px;top:103px;width:4px;height:1px;background:#d0d0d0;"></div>
<div class="b" style="left:1018px;top:120px;width:34px;height:34px;background:#fff;border:1px solid #000;border-radius:1.5px"></div>
<svg style="left:1019px;top:121px;overflow:hidden" width="32" height="32"><text x="3.00" y="22.40" font-family='Liberation Sans' font-size="20.11" font-weight="bold" font-style="normal" textLength="25.70" lengthAdjust="spacingAndGlyphs" fill="#000" stroke="#000" stroke-width="1.2" stroke-linejoin="round">AA</text></svg>
<span class="t" style="left:1055.75px;top:129.75px;font-size:12.5px;line-height:12.5px;color:#c2c2c2;transform:scaleX(0.9946);">Whimsy TT</span>
<div class="b" style="left:1018px;top:158px;width:34px;height:34px;background:#fff;border:1px solid #000;border-radius:1.5px"></div>
<svg style="left:1019px;top:159px;overflow:hidden" width="32" height="32"><g fill="none" stroke="#222" stroke-width="0.75"><path d="M2.2 14 C1.2 10 1.6 7 2.6 6.6 C3.8 6.4 4.2 10 4.6 13.2 M4.8 13.4 C5.6 10 6.8 7.4 7.8 7.8 C8.8 8.4 7.6 12 6.8 15"/><path d="M1.2 14.5 C0 18 0.8 22.6 3.6 22.8 C6.6 22.8 8 20 7 15.2 C5.5 13.4 2.6 13.4 1.2 14.5 Z"/><path d="M1.6 17.4 C3 15.8 5 15.8 6 17 M2 19.6 C3.6 18.6 5 18.8 5.8 19.6"/></g><g fill="none" stroke="#000" stroke-width="1.45"><circle cx="16.6" cy="13.6" r="3.3"/><circle cx="28.3" cy="16.6" r="3.2"/><path d="M14 11.8 C17 7 27 6.6 32.5 9.6"/><path d="M12.4 19.6 C17 23.6 26 23.6 31 19"/></g></svg>
<span class="t" style="left:1055.75px;top:167.75px;font-size:12.5px;line-height:12.5px;color:#c2c2c2;transform:scaleX(0.9939);">Wingdings</span>
<div class="b" style="left:1018px;top:196px;width:34px;height:34px;background:#fff;border:1px solid #000;border-radius:1.5px"></div>
<svg style="left:1019px;top:197px;overflow:hidden" width="32" height="32"><text x="2.00" y="22.80" font-family='Liberation Sans' font-size="21.79" font-weight="normal" font-style="normal" textLength="27.30" lengthAdjust="spacingAndGlyphs" fill="#000" stroke="#fff" stroke-width="0.7">Aa</text></svg>
<span class="t" style="left:1055.74px;top:205.75px;font-size:12.5px;line-height:12.5px;color:#c2c2c2;transform:scaleX(1.0092);">Woodcut weight=101</span>
<div class="b" style="left:1018px;top:234px;width:34px;height:34px;background:#fff;border:1px solid #000;border-radius:1.5px"></div>
<svg style="left:1019px;top:235px;overflow:hidden" width="32" height="32"><text x="2.20" y="22.80" font-family='Liberation Sans' font-size="21.65" font-weight="normal" font-style="normal" textLength="27.10" lengthAdjust="spacingAndGlyphs" fill="#000">Aa</text></svg>
<span class="t" style="left:1055.54px;top:243.75px;font-size:12.5px;line-height:12.5px;color:#e6e6e6;transform:scaleX(0.9329);">X-Files</span>
<div class="b" style="left:1018px;top:272px;width:34px;height:34px;background:#fff;border:1px solid #000;border-radius:1.5px"></div>
<svg style="left:1019px;top:273px;overflow:hidden" width="32" height="32"><g fill="none" stroke="#000" stroke-linecap="round" stroke-linejoin="round"><path d="M2.2 28.8 C5 24 9 16 11.8 11.6" stroke-width="2.7"/><path d="M12 11.4 C12.6 17 12.4 24 13 30" stroke-width="2.6"/><path d="M4.2 24.4 C8 23.6 12 23.4 15.2 23.6" stroke-width="1.5"/><path d="M16.4 28.8 C19 24 23 16 25.8 11.6" stroke-width="2.7"/><path d="M26 11.4 C26.6 17 26.6 24 27.2 30" stroke-width="2.6"/><path d="M18.4 24.4 C22 23.6 26 23.4 30.4 23.4" stroke-width="1.5"/></g></svg>
<span class="t" style="left:1055.52px;top:281.75px;font-size:12.5px;line-height:12.5px;color:#c2c2c2;transform:scaleX(1.0225);">Year supply of fairy cakes</span>
<div class="b" style="left:1018px;top:310px;width:34px;height:34px;background:#fff;border:1px solid #000;border-radius:1.5px"></div>
<svg style="left:1019px;top:311px;overflow:hidden" width="32" height="32"><text x="3.10" y="22.50" font-family='Liberation Sans' font-size="23.32" font-weight="normal" font-style="normal" textLength="25.80" lengthAdjust="spacingAndGlyphs" fill="#000" stroke="#fff" stroke-width="0.45">Aa</text></svg>
<span class="t" style="left:1055.53px;top:319.75px;font-size:12.5px;line-height:12.5px;color:#c2c2c2;transform:scaleX(0.9671);">Yu Gothic</span>
<div class="b" style="left:1018px;top:348px;width:34px;height:34px;background:#fff;border:1px solid #000;border-radius:1.5px"></div>
<svg style="left:1019px;top:349px;overflow:hidden" width="32" height="32"><text x="2.40" y="23.00" font-family='Liberation Sans' font-size="23.18" font-weight="bold" font-style="normal" textLength="27.10" lengthAdjust="spacingAndGlyphs" fill="#000">Aa</text></svg>
<span class="t" style="left:1055.53px;top:357.75px;font-size:12.5px;line-height:12.5px;color:#c2c2c2;transform:scaleX(0.9915);">Yu Gothic Bold</span>
<div class="b" style="left:1018px;top:386px;width:34px;height:34px;background:#fff;border:1px solid #000;border-radius:1.5px"></div>
<svg style="left:1019px;top:387px;overflow:hidden" width="32" height="32"><text x="4.10" y="23.00" font-family='Liberation Sans' font-size="22.63" font-weight="normal" font-style="normal" textLength="24.40" lengthAdjust="spacingAndGlyphs" fill="#000" stroke="#fff" stroke-width="0.6">Aa</text></svg>
<span class="t" style="left:1055.53px;top:395.75px;font-size:12.5px;line-height:12.5px;color:#c2c2c2;transform:scaleX(0.9871);">Yu Gothic Light</span>
<div class="b" style="left:1018px;top:424px;width:34px;height:34px;background:#fff;border:1px solid #000;border-radius:1.5px"></div>
<svg style="left:1019px;top:425px;overflow:hidden" width="32" height="32"><text x="3.10" y="23.20" font-family='Liberation Sans' font-size="23.18" font-weight="normal" font-style="normal" textLength="25.90" lengthAdjust="spacingAndGlyphs" fill="#000" stroke="#fff" stroke-width="0.15">Aa</text></svg>
<span class="t" style="left:1055.53px;top:433.75px;font-size:12.5px;line-height:12.5px;color:#c2c2c2;transform:scaleX(1.0003);">Yu Gothic Medium</span>
<div class="b" style="left:1018px;top:462px;width:34px;height:34px;background:#fff;border:1px solid #000;border-radius:1.5px"></div>
<svg style="left:1019px;top:463px;overflow:hidden" width="32" height="32"><text x="2.40" y="24.50" font-family='Liberation Sans' font-size="20.95" font-weight="normal" font-style="normal" textLength="25.80" lengthAdjust="spacingAndGlyphs" fill="#000" stroke="#fff" stroke-width="0.15">Aa</text></svg>
<span class="t" style="left:1055.53px;top:471.75px;font-size:12.5px;line-height:12.5px;color:#c2c2c2;transform:scaleX(0.9722);">Yu Gothic UI</span>
<div class="b" style="left:1018px;top:500px;width:34px;height:34px;background:#fff;border:1px solid #000;border-radius:1.5px"></div>
<svg style="left:1019px;top:501px;overflow:hidden" width="32" height="32"><text x="2.40" y="24.50" font-family='Liberation Sans' font-size="20.95" font-weight="bold" font-style="normal" textLength="25.80" lengthAdjust="spacingAndGlyphs" fill="#000">Aa</text></svg>
<span class="t" style="left:1055.53px;top:509.75px;font-size:12.5px;line-height:12.5px;color:#c2c2c2;transform:scaleX(0.9794);">Yu Gothic UI Bold</span>
<div class="b" style="left:1018px;top:538px;width:34px;height:34px;background:#fff;border:1px solid #000;border-radius:1.5px"></div>
<svg style="left:1019px;top:539px;overflow:hidden" width="32" height="32"><text x="3.40" y="25.50" font-family='Liberation Sans' font-size="20.95" font-weight="normal" font-style="normal" textLength="24.20" lengthAdjust="spacingAndGlyphs" fill="#000" stroke="#fff" stroke-width="0.6">Aa</text></svg>
<span class="t" style="left:1055.53px;top:547.75px;font-size:12.5px;line-height:12.5px;color:#c2c2c2;transform:scaleX(0.9820);">Yu Gothic UI Light</span>
<div class="b" style="left:1018px;top:576px;width:34px;height:34px;background:#fff;border:1px solid #000;border-radius:1.5px"></div>
<svg style="left:1019px;top:577px;overflow:hidden" width="32" height="32"><text x="2.40" y="24.30" font-family='Liberation Sans' font-size="19.97" font-weight="bold" font-style="normal" textLength="25.80" lengthAdjust="spacingAndGlyphs" fill="#000" stroke="#fff" stroke-width="0.2">Aa</text></svg>
<span class="t" style="left:1055.53px;top:585.75px;font-size:12.5px;line-height:12.5px;color:#c2c2c2;transform:scaleX(0.9796);">Yu Gothic UI Semi-Bold</span>
<div class="b" style="left:1018px;top:614px;width:34px;height:34px;background:#fff;border:1px solid #000;border-radius:1.5px"></div>
<svg style="left:1019px;top:615px;overflow:hidden" width="32" height="32"><text x="2.40" y="24.50" font-family='Liberation Sans' font-size="20.25" font-weight="normal" font-style="normal" textLength="25.80" lengthAdjust="spacingAndGlyphs" fill="#000" stroke="#fff" stroke-width="0.35">Aa</text></svg>
<span class="t" style="left:1055.53px;top:623.75px;font-size:12.5px;line-height:12.5px;color:#c2c2c2;transform:scaleX(0.9778);">Yu Gothic UI Semi-Light</span>
<div class="b" style="left:1018px;top:652px;width:34px;height:34px;background:#fff;border:1px solid #000;border-radius:1.5px"></div>
<svg style="left:1019px;top:653px;overflow:hidden" width="32" height="32"><text x="8.90" y="22.00" font-family='Liberation Sans' font-size="23.20" font-weight="normal" font-style="normal" textLength="12.90" lengthAdjust="spacingAndGlyphs" fill="#000">a</text></svg>
<span class="t" style="left:1056.13px;top:661.75px;font-size:12.5px;line-height:12.5px;color:#c2c2c2;transform:scaleX(0.9428);">ZWAdobeF</span>
<div class="b" style="left:1017px;top:691px;width:343px;height:16px;background:#222222;"></div>
<svg style="left:1349px;top:696px" width="10" height="7"><path d="M0.8 0.8 L5 5.4 L9.2 0.8" stroke="#f0f0f0" stroke-width="1.5" fill="none"/></svg>
<svg style="left:1183px;top:715px" width="13" height="13" viewBox="0 0 13 13"><path d="M10.5 9.4 A4.7 4.7 0 1 1 9 2.5" stroke="#cdcdcd" stroke-width="1.9" fill="none"/><path d="M7.3 5.7 H12 V0.9 Z" fill="#cdcdcd"/></svg>
<div class="b" style="left:1014px;top:707px;width:346px;height:2px;background:#363636;"></div>
<!-- taskbar -->
<div class="b" style="left:0px;top:728px;width:1360px;height:40px;background:#1d1d1d;"></div>
<svg style="left:15.5px;top:739.5px" width="17" height="17" viewBox="0 0 17 17"><path d="M0 2.3 L7 1.3 V8 H0 Z M8 1.15 L17 0 V8 H8 Z M0 9 H7 V15.7 L0 14.7 Z M8 9 H17 V17 L8 15.85 Z" fill="#fff"/></svg>
<div class="b" style="left:48px;top:728px;width:344px;height:39px;background:#f2f2f2;"></div>
<svg style="left:59px;top:738px" width="20" height="20" viewBox="59 738 20 20"><circle cx="70.6" cy="745.6" r="5" fill="none" stroke="#222" stroke-width="1.3"/><path d="M67 749.3 L60.4 755.6" stroke="#222" stroke-width="1.4"/></svg>
<span class="t" style="left:87.73px;top:740.80px;font-size:15px;line-height:15px;color:#2a2a2a;transform:scaleX(0.9850);">Search for anything</span>
<svg style="left:407px;top:739px" width="18" height="18"><circle cx="9" cy="9" r="7" fill="none" stroke="#fff" stroke-width="2"/></svg>
<svg style="left:455px;top:739px" width="18" height="17" viewBox="455 739 18 17" shape-rendering="crispEdges"><path d="M456.5 742.5 V740.5 H466.5 V742.5 M456.5 752.5 V754.5 H466.5 V752.5" stroke="#fff" fill="none"/><rect x="456.5" y="744.5" width="10" height="6" fill="none" stroke="#fff"/><path d="M471.5 740 V755" stroke="#fff"/><rect x="469" y="744" width="3" height="3" fill="#fff"/></svg>
<svg style="left:504px;top:738px" width="22" height="20" viewBox="0 0 22 20"><path d="M0 1.5 H8 L9.5 3 H22 V18 H0 Z" fill="#ffd666"/><path d="M0 1.5 H8 L9.2 3 H0 Z" fill="#e8a200"/><path d="M4 18 V11.5 Q4 10.5 5 10.5 H17 Q18 10.5 18 11.5 V18 H14.5 V14 H7.5 V18 Z" fill="#3a97e8"/><rect x="0" y="17.2" width="22" height="0.8" fill="#e6b84a"/></svg>
<div class="b" style="left:495px;top:766px;width:40px;height:2px;background:#76b9ed;"></div>
<svg style="left:552px;top:736px" width="24" height="24" viewBox="0 0 24 24"><defs><linearGradient id="og" x1="0" x2="1"><stop offset="0" stop-color="#ea1f35"/><stop offset="0.6" stop-color="#d3132b"/><stop offset="1" stop-color="#e8404f"/></linearGradient></defs><circle cx="12" cy="12" r="11.4" fill="url(#og)"/><ellipse cx="11.7" cy="12" rx="5.3" ry="8.8" fill="#1d1d1d"/></svg>
<svg style="left:601px;top:735px" width="24" height="25" viewBox="0 0 24 25"><defs><linearGradient id="fg" x1="0.8" y1="0" x2="0.3" y2="1"><stop offset="0" stop-color="#fff04a"/><stop offset="0.4" stop-color="#ff9a1f"/><stop offset="0.8" stop-color="#ff4a3a"/><stop offset="1" stop-color="#e31587"/></linearGradient></defs><path d="M12 0.5 C14 2 15 4 15.5 5.5 C18 3.5 19.5 5 21.5 8 C25 15 21 24.5 12 24.5 C4 24.5 -1 17 1 9.5 C1.5 7.5 2.5 6 3.5 5 C3.8 6.2 4.2 7 5 7.5 C6.5 5 9 4.5 10 3.5 C10.8 2.7 11.5 1.7 12 0.5 Z" fill="url(#fg)"/><circle cx="12.4" cy="13.4" r="4.4" fill="#8a3fe0"/><path d="M7.5 9.5 C9.5 7.6 13 8.2 14.4 10 C12.4 9.8 11 10.8 11.6 12.2 C9.8 12.8 7.8 11.8 7.5 9.5 Z" fill="#ffa42a"/></svg>
<div class="b" style="left:593px;top:766px;width:40px;height:2px;background:#76b9ed;"></div>
<svg style="left:650px;top:735px" width="25" height="25" viewBox="0 0 25 25"><defs><linearGradient id="eg" x1="0" y1="0" x2="1" y2="0.3"><stop offset="0" stop-color="#2aa0dc"/><stop offset="0.55" stop-color="#2fc3c0"/><stop offset="1" stop-color="#6bd85a"/></linearGradient></defs><circle cx="12.5" cy="12.5" r="12" fill="#1868b7"/><path d="M0.6 12 C1 5 6 0.5 12.5 0.5 C20 0.5 24.6 6 24.4 11.5 C24.2 15 21.5 16.8 18.5 16.8 C15 16.8 13.5 15 14.5 13.5 C15.5 12 14.5 9.5 11.5 9.5 C7 9.5 3 13 3.5 18.5 C1.5 16.5 0.5 14.5 0.6 12 Z" fill="url(#eg)"/><path d="M3.5 18.5 C3 13 7 9.5 11.5 9.5 C9.5 10.5 8.5 12.5 9 15 C9.8 19 14 22 19.5 20.5 C17 23.5 14 24.5 12 24.4 C8.5 24.3 5 22 3.5 18.5 Z" fill="#1553a0"/><path d="M14.2 12 C15.4 10.6 17.6 11 18 13 C18.2 14.4 17.4 15.4 16.4 16 C19.5 17 22.8 15.6 24.4 12.6 L24.4 14.6 C23 17.6 19.6 18.8 16.6 18 C14 17.2 13.2 14 14.2 12 Z" fill="#1d1d1d"/></svg>
<svg style="left:699px;top:736px" width="24" height="24" viewBox="0 0 24 24"><defs><linearGradient id="sg" x1="0" y1="0" x2="0" y2="1"><stop offset="0" stop-color="#15173f"/><stop offset="0.5" stop-color="#14346e"/><stop offset="1" stop-color="#1b86c2"/></linearGradient></defs><circle cx="12" cy="12" r="11.4" fill="url(#sg)"/><circle cx="15.3" cy="8.6" r="3.9" fill="#fff"/><circle cx="15.3" cy="8.6" r="2.4" fill="#1a2a63"/><circle cx="15.3" cy="8.6" r="1.6" fill="none" stroke="#fff" stroke-width="0.9"/><path d="M0.8 11 L8 14 L12.5 10.5 L14.5 12.8 L10 16 C9.5 18.5 6.5 19.2 5 17.5 L1 15.8 Z" fill="#fff"/><circle cx="7.6" cy="16" r="1.9" fill="#d8e4f2" stroke="#fff" stroke-width="0.8"/></svg>
<div class="b" style="left:691px;top:766px;width:31px;height:2px;background:#76b9ed;"></div>
<div class="b" style="left:722px;top:766px;width:9px;height:2px;background:#5d93bd;"></div>
<div class="b" style="left:736px;top:728px;width:48px;height:38px;background:#4c4c4c;"></div>
<div class="b" style="left:736px;top:766px;width:48px;height:2px;background:#76b9ed;"></div>
<svg style="left:747px;top:736px" width="27" height="25" viewBox="747 736 27 25"><path d="M759 741.5 C759 738.5 761 738 763 739.2 L768 739.5 L772.3 737 L772.5 745 L773 752.5 L766 749 L760 747 L755 745.5 L756.5 742.5 Z" fill="#9d9d9d"/><rect x="748" y="745.6" width="24.5" height="14.7" fill="#fff"/><path d="M755 745.6 L757 743 L762 745 L770 752.5 L768 753 L760 748.5 Z" fill="#b9b9b9"/><rect x="754" y="749" width="4.8" height="3.2" fill="#000"/><circle cx="762.6" cy="743.2" r="1.5" fill="#e8e8e8"/><circle cx="767.2" cy="743" r="1.5" fill="#e8e8e8"/><circle cx="762.8" cy="743.3" r="0.6" fill="#555"/><circle cx="767.3" cy="743.1" r="0.6" fill="#555"/></svg>
<svg style="left:1110px;top:743px" width="14" height="9"><path d="M1 7.6 L7 1.6 L13 7.6" stroke="#fff" stroke-width="1.3" fill="none"/></svg>
<svg style="left:1134px;top:742px" width="16" height="14" viewBox="1134 742 16 14"><g fill="none" stroke="#fff" stroke-width="1.2"><path d="M1136 755 C1136.5 749 1141 744 1147.5 743.5"/><path d="M1139.3 755 C1139.8 750.5 1143 747.3 1147.8 746.8"/><path d="M1142.6 755 C1142.9 752.3 1144.8 750.3 1148 750"/></g><circle cx="1146.5" cy="753.6" r="1.6" fill="#fff"/></svg>
<svg style="left:1158px;top:742px" width="14" height="10" viewBox="0 0 14 10"><g fill="none" stroke="#fff" stroke-width="1.25"><path d="M7.6 7.2 C6.4 8.8 3.6 9.2 1.8 7.6 C0.2 6 0.6 3.4 2.6 2.6 C3.8 2.1 5 2.4 5.8 3"/><path d="M5.6 2.6 C6.8 1 9.8 0.6 11.6 2.2 C13.2 3.8 12.8 6.4 10.8 7.2 C9.6 7.7 8.4 7.4 7.6 6.8"/><path d="M4.6 6.2 C5.6 6.6 6.4 6.2 7 5.4 M8.8 3.6 C7.8 3.2 7 3.6 6.4 4.4"/></g></svg>
<svg style="left:1180px;top:741px" width="18" height="14" viewBox="0 0 18 14"><path d="M0.8 4.6 H3.5 L7 1.2 V12.8 L3.5 9.4 H0.8 Z" fill="none" stroke="#fff" stroke-width="1.1"/><path d="M9 4.8 C10 6 10 8 9 9.2 M11 3.2 C12.8 5.4 12.8 8.6 11 10.8" stroke="#fff" stroke-width="1.1" fill="none"/><path d="M13.4 1.4 C16.2 5 16.2 9 13.4 12.6" stroke="#8a8a8a" stroke-width="1" fill="none"/></svg>
<span class="t" style="left:1206.59px;top:741.50px;font-size:12px;line-height:12px;color:#fff;transform:scaleX(0.9244);">ENG</span>
<span class="t" style="left:1251.04px;top:733.00px;font-size:12px;line-height:12px;color:#fff;transform:scaleX(0.9624);">5:42 PM</span>
<span class="t" style="left:1242.42px;top:751.00px;font-size:12px;line-height:12px;color:#fff;transform:scaleX(0.9631);">2020-11-24</span>
<svg style="left:1318px;top:739px" width="26" height="26" viewBox="1318 739 26 26"><path d="M1319 740 H1335.3 V753 H1326 L1323.5 756 V753 H1319 Z" fill="#fff"/><path d="M1322 743.5 H1332.4 M1322 746.5 H1332.4 M1322 749.5 H1332.4" stroke="#1d1d1d" stroke-width="1.1"/><circle cx="1334.7" cy="755.3" r="7.6" fill="#333" stroke="#9a9a9a" stroke-width="1"/></svg>
<span class="t" style="left:1330.2px;top:749.5px;font-size:11.5px;line-height:12px;color:#fff;font-weight:bold">2</span>
<div class="b" style="left:1355px;top:728px;width:1px;height:40px;background:#7a7a7a;"></div>

</body></html>
